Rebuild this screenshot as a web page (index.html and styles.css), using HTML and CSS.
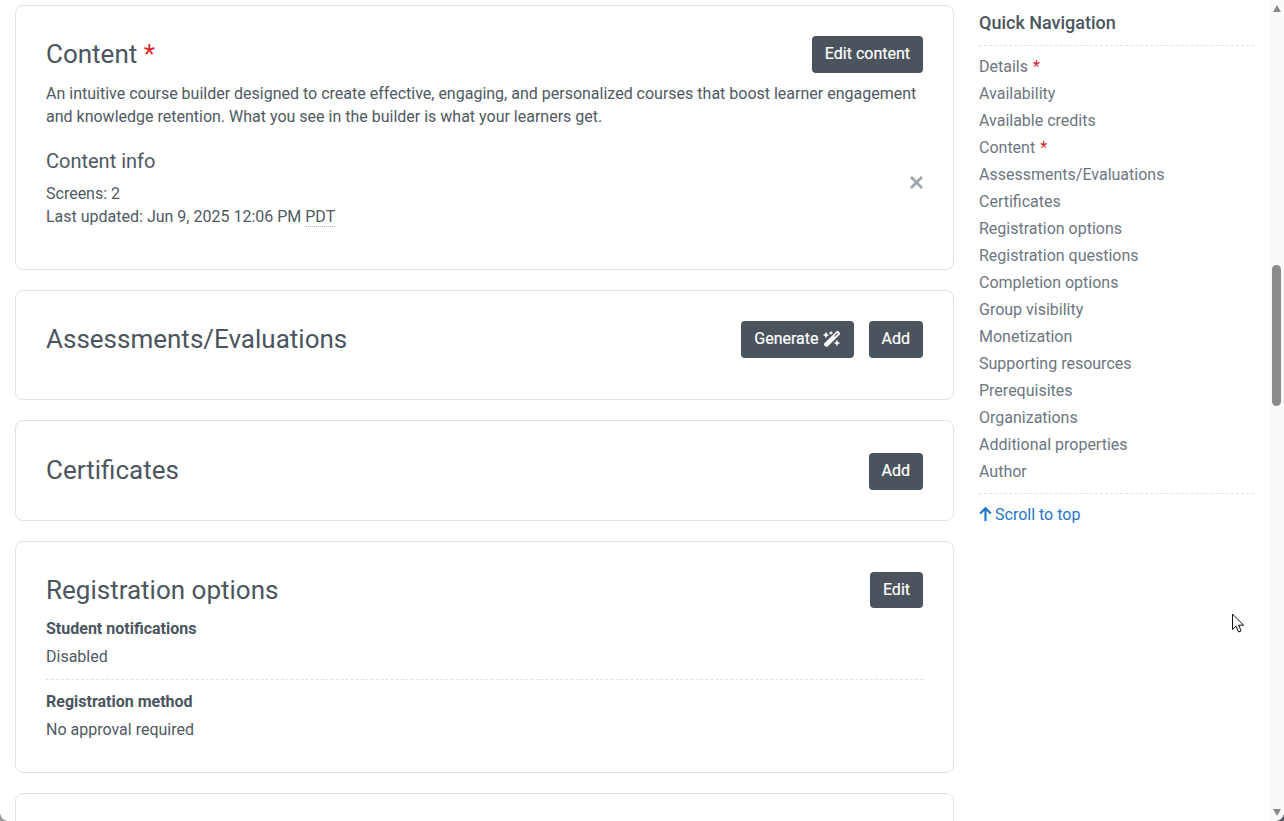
FILE: index.html
```html
<!DOCTYPE html>
<html lang="en">
<head>
<meta charset="utf-8">
<title>Course builder</title>
<link rel="stylesheet" href="styles.css">
</head>
<body>
<div class="window">
  <main class="main">
    <section class="card card-content">
      <div class="card-head">
        <h2 class="card-title">Content <span class="req">*</span></h2>
        <button class="btn">Edit content</button>
      </div>
      <p class="desc">An intuitive course builder designed to create effective, engaging, and personalized courses that boost learner engagement and knowledge retention. What you see in the builder is what your learners get.</p>
      <div class="info-row">
        <div class="info">
          <h3 class="info-title">Content info</h3>
          <div class="info-line">Screens: 2</div>
          <div class="info-line">Last updated: Jun 9, 2025 12:06 PM <abbr class="tz">PDT</abbr></div>
        </div>
        <svg class="close" width="13" height="13" viewBox="0 0 13 13" aria-hidden="true"><path d="M1 1l11 11M12 1L1 12" stroke="#99a1aa" stroke-width="2.500" fill="none"/></svg>
      </div>
    </section>
    <section class="card card-assess">
      <div class="card-head">
        <h2 class="card-title">Assessments/Evaluations</h2>
        <div class="actions">
          <button class="btn">Generate
            <svg class="wand" width="18" height="16" viewBox="0 0 576 512" aria-hidden="true">
              <path fill="#fff" d="M234.700 42.700L197 56.800c-3 1.100-5 4-5 7.200s2 6.100 5 7.200l37.700 14.100L248.800 123c1.100 3 4 5 7.200 5s6.100-2 7.200-5l14.100-37.700L315 71.200c3-1.100 5-4 5-7.200s-2-6.100-5-7.200L277.300 42.700 263.200 5c-1.100-3-4-5-7.200-5s-6.100 2-7.200 5L234.700 42.700zM46.100 395.400c-18.700 18.700-18.700 49.100 0 67.900l34.600 34.600c18.700 18.700 49.100 18.700 67.900 0L529.900 116.500c18.700-18.700 18.700-49.100 0-67.900L495.300 14.100c-18.700-18.700-49.100-18.700-67.900 0L46.100 395.400zM484.600 82.600l-105 105-23.300-23.300 105-105 23.300 23.300zM7.500 117.200C3 118.900 0 123.200 0 128s3 9.100 7.500 10.800L64 160l21.200 56.500c1.700 4.500 6 7.500 10.800 7.500s9.100-3 10.800-7.500L128 160l56.500-21.200c4.500-1.700 7.500-6 7.500-10.800s-3-9.100-7.500-10.800L128 96 106.800 39.500C105.100 35 100.800 32 96 32s-9.100 3-10.800 7.500L64 96 7.500 117.200zm352 256c-4.500 1.700-7.500 6-7.500 10.800s3 9.100 7.500 10.800L416 416l21.200 56.500c1.700 4.500 6 7.500 10.800 7.500s9.100-3 10.800-7.500L480 416l56.500-21.200c4.500-1.700 7.500-6 7.500-10.800s-3-9.100-7.500-10.800L480 352l-21.200-56.500c-1.700-4.500-6-7.500-10.800-7.500s-9.100 3-10.800 7.500L416 352l-56.500 21.200z"/>
            </svg>
          </button>
          <button class="btn">Add</button>
        </div>
      </div>
    </section>
    <section class="card card-cert">
      <div class="card-head">
        <h2 class="card-title">Certificates</h2>
        <button class="btn">Add</button>
      </div>
    </section>
    <section class="card card-reg">
      <div class="card-head">
        <h2 class="card-title">Registration options</h2>
        <button class="btn btn-short">Edit</button>
      </div>
      <div class="field">
        <div class="field-label">Student notifications</div>
        <div class="field-value">Disabled</div>
      </div>
      <div class="field field-last">
        <div class="field-label">Registration method</div>
        <div class="field-value">No approval required</div>
      </div>
    </section>
    <section class="card card-next"></section>
  </main>
  <aside class="side">
    <h4 class="side-title">Quick Navigation</h4>
    <nav class="side-nav">
      <a class="side-link">Details <span class="req">*</span></a>
      <a class="side-link">Availability</a>
      <a class="side-link">Available credits</a>
      <a class="side-link">Content <span class="req">*</span></a>
      <a class="side-link">Assessments/Evaluations</a>
      <a class="side-link">Certificates</a>
      <a class="side-link">Registration options</a>
      <a class="side-link">Registration questions</a>
      <a class="side-link">Completion options</a>
      <a class="side-link">Group visibility</a>
      <a class="side-link">Monetization</a>
      <a class="side-link">Supporting resources</a>
      <a class="side-link">Prerequisites</a>
      <a class="side-link">Organizations</a>
      <a class="side-link">Additional properties</a>
      <a class="side-link">Author</a>
    </nav>
    <a class="top-link">
      <svg class="top-arrow" width="13" height="15" viewBox="0 0 13 15" aria-hidden="true"><path d="M6.500 15V2.500M1.200 7.500L6.500 2.200l5.300 5.300" stroke="#1f76c8" stroke-width="2.200" fill="none"/></svg>Scroll to top</a>
  </aside>
  <div class="scrollbar">
    <span class="arrow arrow-up"></span>
    <div class="track"><div class="thumb"></div></div>
    <span class="arrow arrow-down"></span>
  </div>
  <svg class="cursor" width="14" height="21" viewBox="0 0 14 21" aria-hidden="true"><path d="M1.500 1v15.500l3.600-3.300 2.400 5.800 2.600-1.100-2.500-5.700h5z" fill="#fff" stroke="#111" stroke-width="1"/></svg>
  <span class="corner corner-left"></span>
  <span class="corner corner-right"></span>
</div>
</body>
</html>
```
FILE: styles.css
```css
* { box-sizing: border-box; }
html, body { margin: 0; padding: 0; height: 100%; overflow: hidden; background: #fff; }
body { font-family: Roboto, "Liberation Sans", sans-serif; font-size: 16px; color: #4f5963; }

.window { position: relative; display: flex; width: 1284px; height: 821px; overflow: hidden; background: #fff; }

.main { width: 969px; flex: none; padding: 5px 15px 0; display: flex; flex-direction: column; gap: 20px; }
.card { flex: none; border: 1px solid #e0e3e6; border-radius: 8px; padding: 30px; background: #fff; }
.card-content { height: 265px; }
.card-assess { height: 110px; }
.card-cert { height: 101px; padding-top: 32px; }
.card-cert .card-title { line-height: 34px; }
.card-reg { height: 232px; }
.card-next { height: 100px; }

.card-head { display: flex; justify-content: space-between; align-items: flex-start; }
.card-title { margin: 0; font-size: 26px; font-weight: 400; line-height: 36px; color: #4b5560; }
.req { color: #d9262c; }
.side-link .req { margin-left: 1px; }
.actions { display: flex; gap: 15px; }

.btn { display: inline-flex; align-items: center; height: 37px; padding: 0 13px 2px; border: 0; border-radius: 4px; background: #4b535c; color: #fff; font: 400 16px/24px Roboto, sans-serif; -webkit-text-stroke: 0.2px #fff; }
.btn-short { height: 36px; padding-bottom: 1px; }
.wand { margin-left: 4px; }

.desc { margin: 9px 0 0; line-height: 23px; width: 877px; }
.info-row { display: flex; justify-content: space-between; align-items: flex-start; margin-top: 20px; }
.info-title { margin: 0 0 7px; font-size: 20px; font-weight: 400; line-height: 27px; }
.info-line { line-height: 23px; }
.tz { text-decoration: none; border-bottom: 1px dotted #adb5bd; }
.close { margin-top: 28px; }

.field { border-bottom: 1px dashed #e0e3e6; padding-bottom: 8px; }
.card-reg .card-head + .field { margin-top: 7px; }
.field-last { border-bottom: 0; margin-top: 8px; }
.field-label { font-weight: 700; line-height: 28px; font-size: 16px; color: #4b5560; }
.field-value { line-height: 28px; }

.side { width: 300px; flex: none; padding: 0 15px 0 10px; }
.side-title { margin: 0; padding: 10px 0 10px; height: 46px; font-size: 18px; font-weight: 500; line-height: 25px; border-bottom: 1px dashed #e0e3e6; color: #4b5560; }
.side-nav { display: flex; flex-direction: column; padding: 7px 0 8px; border-bottom: 1px dashed #e0e3e6; }
.side-link { line-height: 27px; color: #6c7681; }
.top-link { display: flex; align-items: center; gap: 3px; margin-top: 7px; line-height: 27px; color: #1f76c8; }
.top-arrow { margin-top: -2px; }

.scrollbar { width: 15px; flex: none; display: flex; flex-direction: column; align-items: center; background: #fafafa; }
.arrow { flex: none; width: 0; height: 0; border-left: 4.500px solid transparent; border-right: 4.500px solid transparent; }
.arrow-up { margin-top: 5px; border-bottom: 7px solid #8a8a8a; }
.arrow-down { margin-bottom: 5px; border-top: 7px solid #8a8a8a; }
.track { flex: 1; width: 100%; padding-top: 253px; display: flex; justify-content: center; }
.thumb { width: 9px; height: 141px; border-radius: 5px; background: #8a8a8a; }

.cursor { position: absolute; left: 1231px; top: 613px; }
.corner { position: absolute; bottom: 0; width: 8px; height: 8px; }
.corner-left { left: 0; background: radial-gradient(circle at 100% 0, transparent 7.500px, #9a9a9a 8px); }
.corner-right { right: 0; background: radial-gradient(circle at 0 0, transparent 7.500px, #555a60 8px); }
```
